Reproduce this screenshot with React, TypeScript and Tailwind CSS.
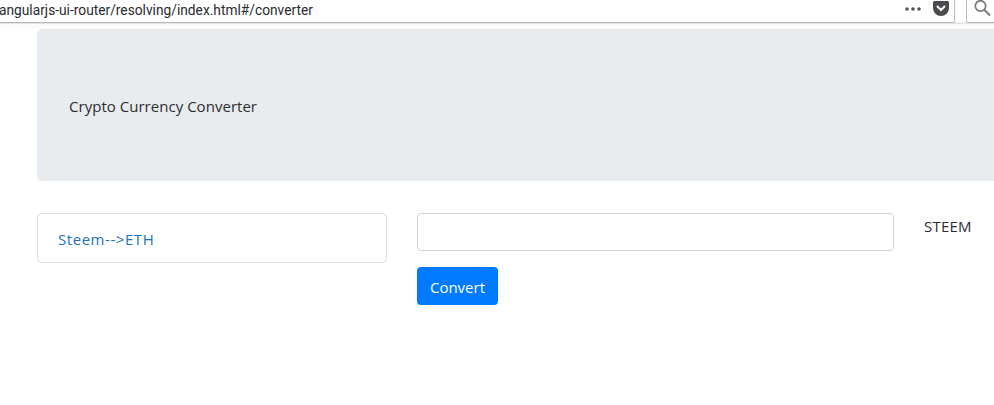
import React from 'react';

const font = { fontFamily: '"Open Sans", "Noto Sans", sans-serif' };

const BrowserBar: React.FC = () => (
  <div className="flex h-[23px] bg-white">
    <div className="flex flex-1 items-center justify-between border-b border-r border-[#b9b9b9] rounded-br-[2px] h-[23px]">
      <span className="text-[13.75px] leading-[16px] text-[#2a2a2e] -ml-px font-['Roboto',sans-serif] whitespace-nowrap -mt-[3px]">
        angularjs-ui-router/resolving/index.html#/converter
      </span>
      <div className="flex items-center gap-[12px] pr-[5px] -mt-[6px]">
        <svg width="16" height="4" viewBox="0 0 16 4" fill="#55555a" className="mt-[2px]">
          <circle cx="2" cy="2" r="1.8" />
          <circle cx="8" cy="2" r="1.8" />
          <circle cx="14" cy="2" r="1.8" />
        </svg>
        <svg width="16" height="15" viewBox="0 0 16 15">
          <path d="M1.5 0h13A1.5 1.5 0 0 1 16 1.5V7a8 8 0 0 1-16 0V1.5A1.5 1.5 0 0 1 1.5 0z" fill="#4a4a4f" />
          <path d="M4.5 5.5L8 9l3.5-3.5" fill="none" stroke="#fff" strokeWidth="2" strokeLinecap="round" />
        </svg>
      </div>
    </div>
    <div className="w-[11px] border-b border-[#f0f0f0]" />
    <div className="w-[28px] h-[23px] border-l border-b border-[#b9b9b9] rounded-bl-[2px] pl-[7px]">
      <svg width="17" height="16" viewBox="0 0 17 16" fill="none" stroke="#77777c" strokeWidth="1.7">
        <circle cx="6.5" cy="6" r="5.2" />
        <path d="M10.2 9.8L16 15.5" strokeWidth="2" />
      </svg>
    </div>
  </div>
);

export default function App() {
  return (
    <div className="h-[405px] w-[994px] overflow-hidden bg-white text-[#2a2e32]" style={font}>
      <BrowserBar />
      <div className="h-[6px] border-t border-[#e4e4e4] bg-[#fbfbfb]" />
      <div className="pl-[37px]">
        <div className="flex h-[152px] w-[1000px] items-center rounded-l-[5px] bg-[#e9ecef] pl-[32px]">
          <p className="text-[15px] leading-[22px] tracking-[0.03px] mt-[1px]">Crypto Currency Converter</p>
        </div>
        <div className="mt-[32px] flex items-start">
          <div className="flex h-[50px] w-[350px] items-center rounded-[4px] border border-[#dfdfdf] pl-[20px]">
            <a className="text-[15px] leading-[22px] text-[#1a73c0] tracking-[0.55px] mt-[2px]">Steem--&gt;ETH</a>
          </div>
          <div className="ml-[30px] w-[477px]">
            <input className="block h-[38px] w-full rounded-[4px] border border-[#ced4da] bg-white" />
            <button className="mt-[16px] block h-[38px] w-[81px] rounded-[4px] bg-[#007bff] text-[15px] text-white pt-[2px]">
              Convert
            </button>
          </div>
          <span className="ml-[30px] mt-[2px] text-[15px] leading-[22px] tracking-[0.2px]">STEEM</span>
        </div>
      </div>
    </div>
  );
}
